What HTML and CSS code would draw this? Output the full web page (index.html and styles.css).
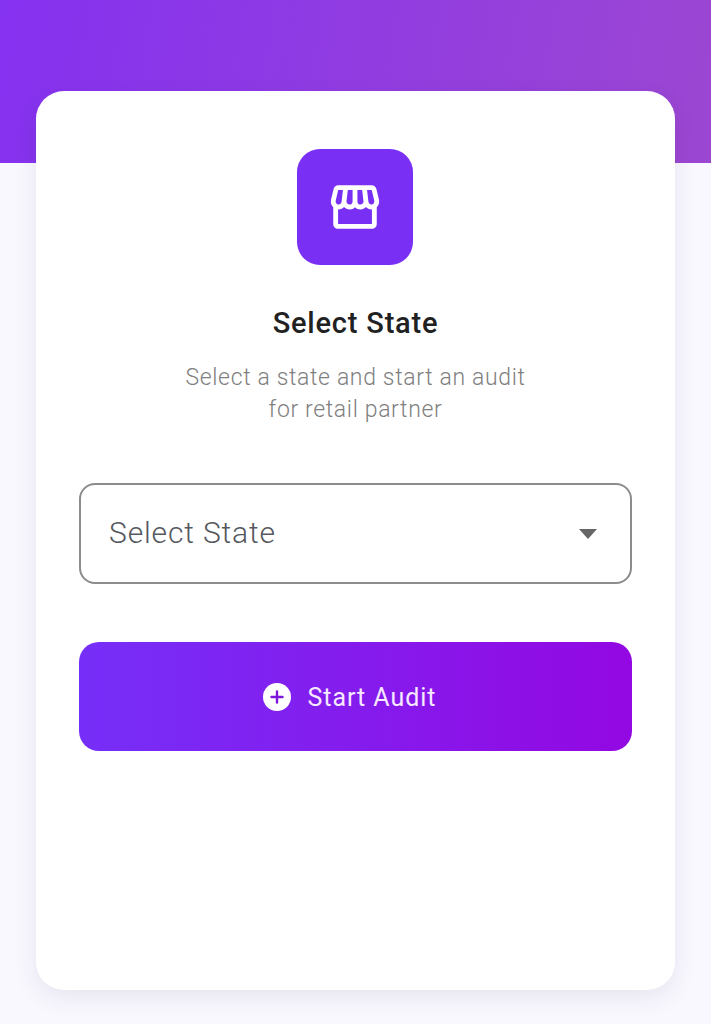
FILE: index.html
```html
<!DOCTYPE html>
<html lang="en">
<head>
    <meta charset="UTF-8">
    <meta name="viewport" content="width=device-width, initial-scale=1.0">
    <title>Select State</title>
    <link rel="stylesheet" href="styles.css">
</head>
<body>
    <!-- Purple header band, the card overlaps it -->
    <div class="header-band"></div>

    <div class="card">
        <div class="store-badge">
            <svg class="store-icon" viewBox="0 0 24 24" aria-hidden="true">
                <path d="M21.9 8.89l-1.05-4.37c-.22-.9-1-1.52-1.91-1.52H5.05c-.9 0-1.69.63-1.9 1.52L2.1 8.89c-.24 1.02-.02 2.06.62 2.88.08.11.19.19.28.29V19c0 1.1.9 2 2 2h14c1.1 0 2-.9 2-2v-6.94c.09-.09.2-.18.28-.28.64-.82.87-1.87.62-2.89zm-2.99-3.9l1.05 4.37c.1.42.01.84-.25 1.17-.14.18-.44.47-.94.47-.61 0-1.14-.49-1.21-1.14L16.98 5l1.93-.01zM13 5h1.96l.54 4.52c.05.39-.07.78-.33 1.07-.22.26-.54.41-.95.41-.67 0-1.22-.59-1.22-1.31V5zM8.49 9.52L9.04 5H11v4.69c0 .72-.55 1.31-1.29 1.31-.34 0-.65-.15-.89-.41-.25-.29-.37-.68-.33-1.07zm-4.45-.16L5.05 5h1.97l-.58 4.86c-.08.65-.6 1.14-1.21 1.14-.49 0-.8-.29-.93-.47-.27-.32-.36-.75-.26-1.17zM5 19v-6.03c.08.01.15.03.23.03.87 0 1.66-.36 2.24-.95.6.6 1.4.95 2.31.95.87 0 1.65-.36 2.23-.93.59.57 1.39.93 2.29.93.84 0 1.64-.35 2.24-.95.58.59 1.37.95 2.24.95.08 0 .15-.02.23-.03V19H5z"/>
            </svg>
        </div>

        <h1 class="card-title">Select State</h1>
        <p class="card-text">Select a state and start an audit<br>for retail partner</p>

        <div class="state-select">
            <span>Select State</span>
            <span class="select-arrow"></span>
        </div>

        <button class="start-btn">
            <svg class="plus-icon" viewBox="0 0 28 28" aria-hidden="true">
                <circle cx="14" cy="14" r="14" fill="#fff"/>
                <path d="M14 8.5v11M8.5 14h11" stroke="#7f16dc" stroke-width="2.4" stroke-linecap="round"/>
            </svg>
            <span class="start-label">Start Audit</span>
        </button>
    </div>
</body>
</html>
```

FILE: styles.css
```css
body {
    margin: 0;
    height: 1024px;
    overflow: hidden;
    background-color: #f9f8ff;
    font-family: Roboto, "Liberation Sans", sans-serif;
}
.header-band {
    height: 163px;
    background: linear-gradient(100deg, #8531f0 0%, #9c47d2 100%);
}
.card {
    display: flex;
    flex-direction: column;
    align-items: center;
    box-sizing: border-box;
    width: 639px;
    height: 899px;
    margin: -72px 0 0 36px;
    padding: 58px 43px 0;
    background-color: #fff;
    border-radius: 28px;
    box-shadow: 0 8px 24px rgba(40, 30, 70, 0.09);
}
.store-badge {
    display: flex;
    align-items: center;
    justify-content: center;
    width: 116px;
    height: 116px;
    margin-right: 1px;
    background-color: #7a2ff5;
    border-radius: 23px;
}
.store-icon {
    width: 58px;
    height: 58px;
    fill: #fff;
}
.card-title {
    margin: 40px 0 0;
    font-size: 29px;
    line-height: 36px;
    font-weight: 500;
    letter-spacing: 0.8px;
    color: #212121;
}
.card-text {
    margin: 21px 0 0;
    font-size: 23px;
    line-height: 32px;
    font-weight: 300;
    letter-spacing: 0.65px;
    text-align: center;
    color: #808080;
}
.state-select {
    display: flex;
    align-items: center;
    justify-content: space-between;
    box-sizing: border-box;
    width: 100%;
    height: 101px;
    margin-top: 57px;
    padding: 0 33px 3px 28px;
    border: 2px solid #8c8c8c;
    border-radius: 16px;
    font-size: 30px;
    font-weight: 300;
    letter-spacing: 0.85px;
    color: #55585e;
}
.select-arrow {
    width: 0;
    height: 0;
    margin-top: 4px;
    border-left: 9px solid transparent;
    border-right: 9px solid transparent;
    border-top: 10px solid #666;
}
.start-btn {
    display: flex;
    align-items: center;
    justify-content: center;
    gap: 17px;
    box-sizing: border-box;
    width: 100%;
    height: 109px;
    margin-top: 58px;
    padding: 0 12px 0 0;
    border: none;
    border-radius: 20px;
    background: linear-gradient(90deg, #762ff8 0%, #9308e2 100%);
    font-family: inherit;
    font-size: 25px;
    letter-spacing: 0.95px;
    color: #f6e8ff;
    cursor: pointer;
}
.start-label {
    padding-top: 2px;
}
.plus-icon {
    width: 28px;
    height: 28px;
}
```
